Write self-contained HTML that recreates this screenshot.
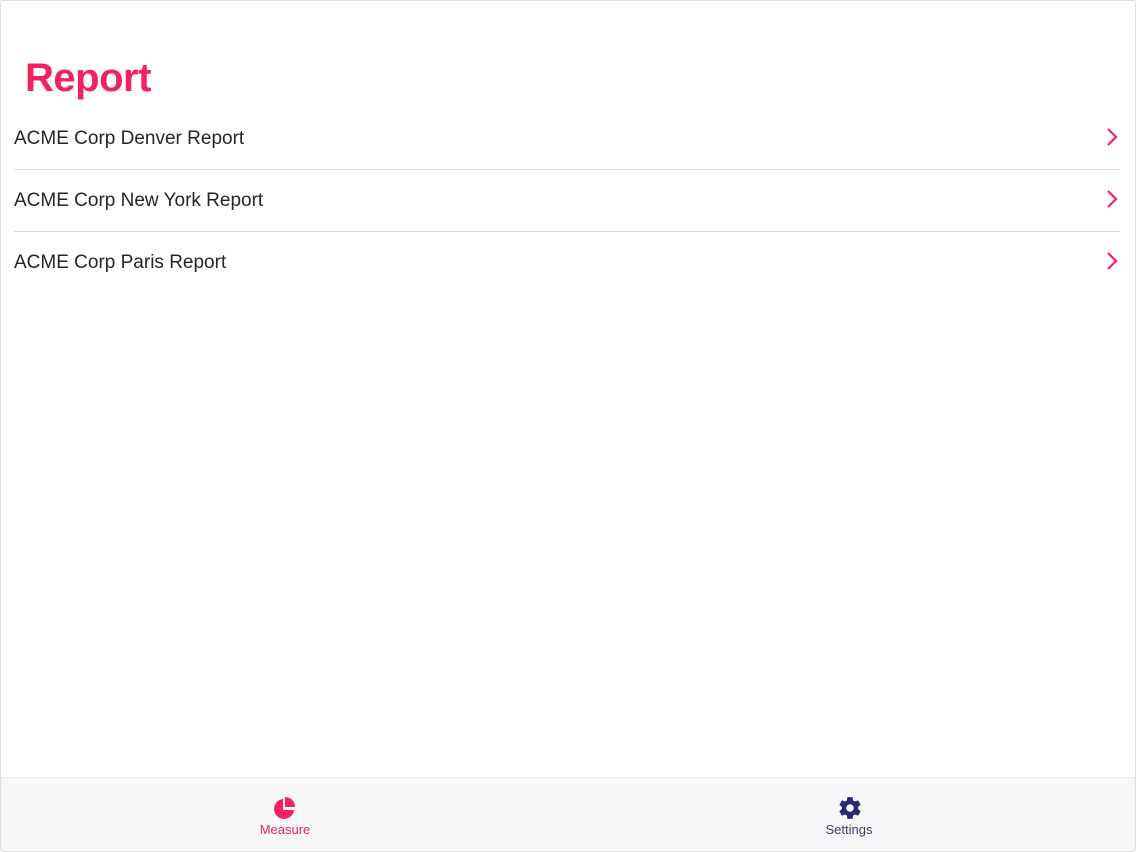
<!DOCTYPE html>
<html><head><meta charset="utf-8"><style>
html,body{margin:0;padding:0;width:1136px;height:852px;overflow:hidden;background:#fff;font-family:"Liberation Sans",sans-serif}
.frame{position:absolute;left:0;top:0;width:1134px;height:850px;border:1px solid #e0e0e0;border-radius:3px}
h1{position:absolute;left:25px;top:56px;margin:0;font-size:40px;font-weight:bold;color:#f3215e;letter-spacing:-0.5px}
.row{position:absolute;left:14px;width:1106px;height:62px;border-bottom:1px solid #ddd;font-size:19px;color:#262626}
.row span{position:absolute;top:21px;left:0}
.row svg{position:absolute;right:2px;top:20px}
.tab{position:absolute;left:1px;top:777px;width:1134px;height:72px;background:#f7f6f8;border-top:1px solid #e8e8e8}
.t{position:absolute;font-size:13px;text-align:center}
</style></head><body>
<div class="frame"></div>
<h1>Report</h1>
<div class="row" style="top:107px"><span>ACME Corp Denver Report</span><svg width="12" height="20" viewBox="0 0 12 20"><path d="M2 2l8 8-8 8" stroke="#f3215e" stroke-width="2.2" fill="none"/></svg></div>
<div class="row" style="top:169px"><span>ACME Corp New York Report</span><svg width="12" height="20" viewBox="0 0 12 20"><path d="M2 2l8 8-8 8" stroke="#f3215e" stroke-width="2.2" fill="none"/></svg></div>
<div class="row" style="top:231px;border-bottom:none"><span>ACME Corp Paris Report</span><svg width="12" height="20" viewBox="0 0 12 20"><path d="M2 2l8 8-8 8" stroke="#f3215e" stroke-width="2.2" fill="none"/></svg></div>
<div class="tab">
<svg style="position:absolute;left:270px;top:16px" width="28" height="28" viewBox="0 0 28 28"><path d="M12 5A10 10 0 1 0 23 16H12Z" fill="#f3215e"/><path d="M14 3A10 10 0 0 1 24 13H14Z" fill="#f3215e"/></svg>
<div class="t" style="left:244px;top:44px;width:80px;color:#f3215e">Measure</div>
<svg style="position:absolute;left:836px;top:17px" width="26" height="26" viewBox="0 0 24 24"><path fill="#2c2a6e" d="M19.4 13c.04-.33.06-.66.06-1s-.02-.67-.06-1l2.1-1.650c.2-.15.24-.42.12-.64l-2-3.46c-.12-.22-.39-.3-.61-.22l-2.49 1c-.52-.4-1.080-.73-1.690-.98l-.38-2.65A.49.49 0 0 0 14 2h-4c-.25 0-.46.18-.49.42l-.38 2.65c-.61.25-1.17.59-1.69.98l-2.49-1c-.23-.09-.49 0-.61.22l-2 3.46c-.13.22-.07.49.12.64L4.57 11c-.04.33-.07.66-.07 1s.03.67.07 1l-2.11 1.65c-.19.15-.24.42-.12.64l2 3.46c.12.22.39.3.61.22l2.49-1c.52.4 1.08.73 1.69.98l.38 2.65c.03.24.24.42.49.42h4c.25 0 .46-.18.49-.42l.38-2.65c.61-.25 1.17-.59 1.69-.98l2.49 1c.23.09.49 0 .61-.22l2-3.46c.12-.22.07-.49-.12-.64L19.4 13zM12 15.5A3.5 3.5 0 1 1 12 8.5a3.5 3.5 0 0 1 0 7z"/></svg>
<div class="t" style="left:808px;top:44px;width:80px;color:#3d3b5e">Settings</div>
</div>
</body></html>
